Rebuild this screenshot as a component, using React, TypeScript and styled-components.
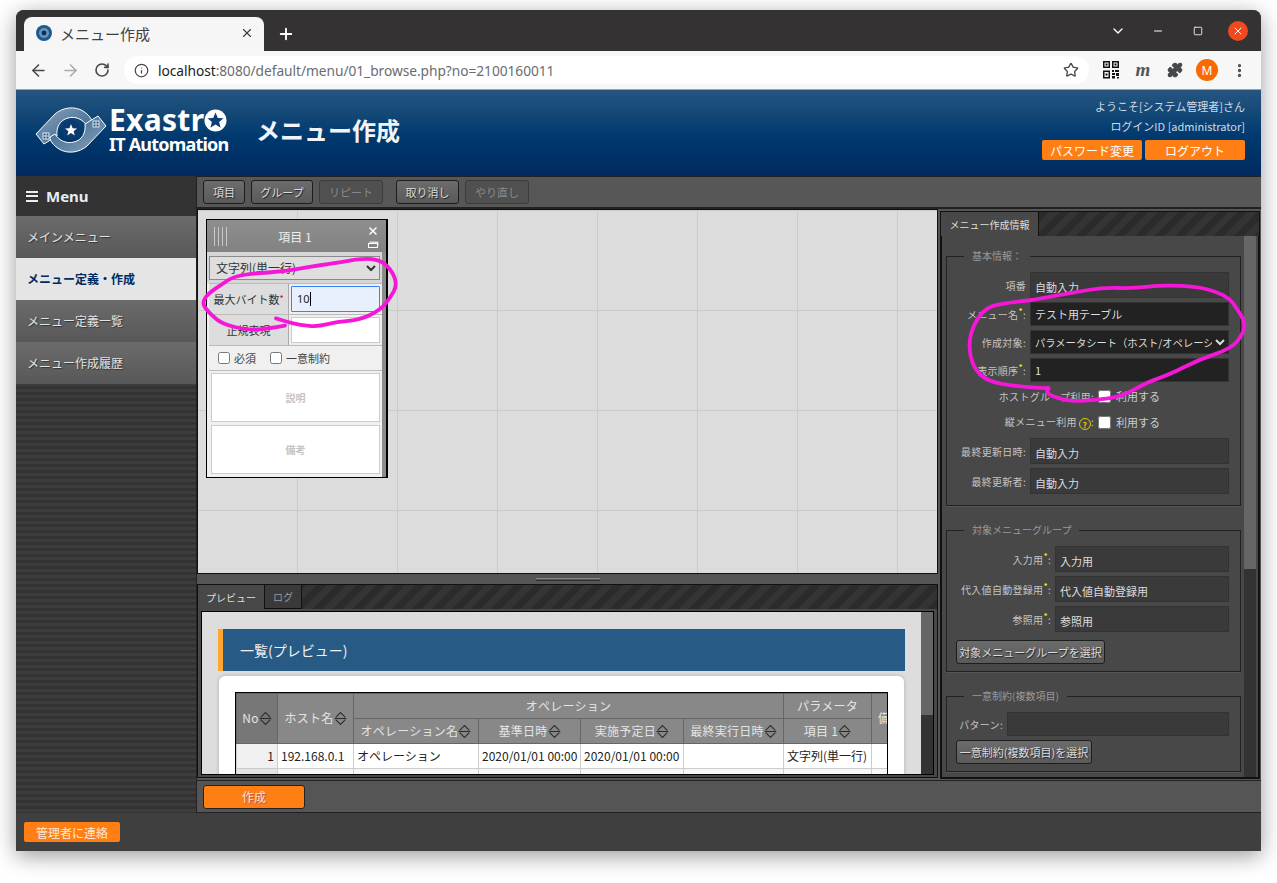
import React from 'react';
import styled, { createGlobalStyle } from 'styled-components';
import { ArrowLeft, ArrowRight, RotateCw, Info, Star, Puzzle, MoreVertical, ChevronDown, Plus, X, Minus, Square } from 'lucide-react';

const GlobalStyle = createGlobalStyle`
  html, body { margin: 0; padding: 0; background: #fff; }
  * { box-sizing: border-box; }
  body { font-family: "Noto Sans CJK JP", "Noto Sans", sans-serif; }
`;

const Win = styled.div`
  position: relative;
  width: 1245px;
  height: 841px;
  margin: 10px 0 0 16px;
  border-radius: 8px 8px 0 0;
  overflow: hidden;
  display: flex;
  flex-direction: column;
  box-shadow: 0 5px 22px rgba(0, 0, 0, 0.4);
  background: #444;
`;

const Frame = styled.div`
  width: 1245px;
  height: 871px;
`;

/* browser chrome */
const TitleBar = styled.div`
  height: 41px;
  flex: none;
  background: #343233;
  display: flex;
  align-items: flex-end;
  padding: 0 3px 0 8px;
`;
const Tab = styled.div`
  width: 240px;
  height: 34px;
  background: #f6f6f6;
  border-radius: 8px 8px 0 0;
  display: flex;
  align-items: center;
  padding: 0 10px 2px 12px;
  gap: 8px;
  color: #3c4043;
  font-size: 15px;
`;
const TabTitle = styled.span`
  flex: 1;
`;
const NewTab = styled.div`
  width: 44px;
  height: 34px;
  color: #fff;
  display: flex;
  align-items: center;
  justify-content: center;
`;
const WinControls = styled.div`
  margin-left: auto;
  display: flex;
  height: 41px;
  align-items: center;
`;
const WinButton = styled.div`
  width: 40px;
  height: 40px;
  display: flex;
  align-items: center;
  justify-content: center;
  color: #fff;
`;
const CloseDot = styled.div`
  width: 20px;
  height: 20px;
  border-radius: 50%;
  background: #f0491f;
  display: flex;
  align-items: center;
  justify-content: center;
  color: #fff;
`;
const AddressBar = styled.div`
  height: 39px;
  flex: none;
  background: #f7f7f7;
  display: flex;
  align-items: center;
  padding: 0 5px 0 6px;
  border-bottom: 1px solid #8fa5b8;
`;
const NavButton = styled.div<{ $dim?: boolean }>`
  width: 32px;
  height: 32px;
  display: flex;
  align-items: center;
  justify-content: center;
  color: ${p => (p.$dim ? '#ababab' : '#46484b')};
`;
const Pill = styled.div`
  width: 965px;
  height: 28px;
  margin-left: 6px;
  margin-right: 6px;
  background: #fff;
  border-radius: 14px;
  display: flex;
  align-items: center;
  padding: 0 10px 0 10px;
  gap: 9px;
  color: #46484b;
`;
const Url = styled.div`
  flex: 1;
  font-family: "Noto Sans", sans-serif;
  font-size: 13.75px;
  color: #6a6d70;
  letter-spacing: -0.05px;
`;
const Host = styled.span`
  color: #202124;
`;
const MarkM = styled.span`
  font-family: "Liberation Serif", serif;
  font-style: italic;
  font-weight: bold;
  font-size: 19px;
  color: #555;
`;
const Avatar = styled.div`
  width: 22px;
  height: 22px;
  border-radius: 50%;
  background: #f66a00;
  color: #fff;
  font-family: "Noto Sans", sans-serif;
  font-size: 12px;
  display: flex;
  align-items: center;
  justify-content: center;
`;

/* page header */
const Header = styled.div`
  height: 86px;
  flex: none;
  background: linear-gradient(#265680, #00396e 55%, #002a60);
  display: flex;
  align-items: center;
  padding: 0 16px 0 19px;
  color: #fff;
`;
const Logo = styled.div`
  display: flex;
  align-items: flex-start;
  width: 223px;
  gap: 2px;
  margin-bottom: 6px;
`;
const MarkSlot = styled.div`
  padding-top: 1px;
  height: 50px;
`;
const LogoWords = styled.div`
  display: flex;
  flex-direction: column;
  color: #fff;
  font-family: "Noto Sans", sans-serif;
  font-weight: 700;
`;
const LogoTop = styled.div`
  display: flex;
  align-items: center;
  font-size: 30px;
  height: 30px;
  line-height: 30px;
  letter-spacing: 0.3px;
`;
const LogoBottom = styled.div`
  font-size: 18px;
  height: 18px;
  line-height: 18px;
  letter-spacing: -0.8px;
`;
const PageTitle = styled.div`
  font-size: 24px;
  font-weight: 700;
  color: #f0f4f8;
  margin-left: -2px;
  margin-bottom: 8px;
`;
const UserBox = styled.div`
  margin-left: auto;
  align-self: flex-start;
  padding-top: 6px;
  display: flex;
  flex-direction: column;
  align-items: flex-end;
  font-size: 11px;
  color: #cfdbe6;
`;
const UserLine = styled.div`
  height: 20px;
  line-height: 20px;
`;
const UserButtons = styled.div`
  display: flex;
  gap: 3px;
  margin-top: 4px;
`;
const OrangeButton = styled.div`
  width: 100px;
  height: 20px;
  background: #ff7f14;
  border-radius: 2px;
  color: #fff;
  font-size: 12px;
  display: flex;
  align-items: center;
  justify-content: center;
`;

/* application */
const Body = styled.div`
  flex: 1;
  display: flex;
  min-height: 0;
`;
const Sidebar = styled.div`
  width: 180px;
  flex: none;
  background: repeating-linear-gradient(#333 0 3px, #3c3c3c 3px 6px);
`;
const MenuHead = styled.div`
  height: 40px;
  background: #333;
  color: #e6eef5;
  font-family: "Noto Sans", sans-serif;
  font-weight: 700;
  font-size: 15px;
  display: flex;
  align-items: center;
  padding-left: 10px;
  gap: 8px;
`;
const Burger = styled.div`
  width: 12px;
  height: 11px;
  border-top: 2px solid #eee;
  border-bottom: 2px solid #eee;
  position: relative;
  &::after {
    content: '';
    position: absolute;
    left: 0;
    right: 0;
    top: 2.5px;
    height: 2px;
    background: #eee;
  }
`;
const MenuItem = styled.div<{ $active?: boolean }>`
  height: 42px;
  display: flex;
  align-items: center;
  padding: 0 0 2px 11px;
  font-size: 12px;
  font-weight: ${p => (p.$active ? 700 : 400)};
  color: ${p => (p.$active ? '#002b62' : '#e4e4e4')};
  background: ${p => (p.$active ? '#e5e5e5' : 'linear-gradient(#6b6b6b, #585858)')};
  text-shadow: ${p => (p.$active ? 'none' : '1px 1px 1px #333')};
`;
const Main = styled.div`
  flex: 1;
  min-width: 0;
  display: flex;
  flex-direction: column;
  background: #555;
  border-left: 1px solid #222;
  border-top: 1px solid #222;
`;
const ToolBar = styled.div`
  height: 32px;
  flex: none;
  display: flex;
  align-items: center;
  gap: 6px;
  padding: 0 6px;
  background: #575757;
  border-bottom: 2px solid #222;
`;
const ToolButton = styled.div<{ $off?: boolean; $gap?: boolean; $w: number }>`
  height: 24px;
  width: ${p => p.$w}px;
  display: flex;
  align-items: center;
  justify-content: center;
  font-size: 11px;
  border-radius: 3px;
  margin-left: ${p => (p.$gap ? '7px' : '0')};
  color: ${p => (p.$off ? '#8a8a8a' : '#ddd')};
  background: ${p => (p.$off ? '#505050' : 'linear-gradient(#6c6c6c, #5a5a5a)')};
  border: 1px solid ${p => (p.$off ? '#3c3c3c' : '#1d1d1d')};
  text-shadow: ${p => (p.$off ? 'none' : '1px 1px 1px #222')};
`;
const Workspace = styled.div`
  flex: 1;
  display: flex;
  min-height: 0;
  gap: 2px;
  padding-right: 1px;
`;
const LeftColumn = styled.div`
  width: 741px;
  flex: none;
  display: flex;
  flex-direction: column;
`;
const Canvas = styled.div`
  height: 365px;
  flex: none;
  border: 1px solid #111;
  background-color: #dcdcdc;
  background-image: linear-gradient(#cbcbcb 1px, transparent 1px), linear-gradient(90deg, #cbcbcb 1px, transparent 1px);
  background-size: 100px 100px;
  background-position: 99px 100px;
  padding: 9px 0 0 8px;
`;

/* menu item card on the canvas */
const Card = styled.div`
  width: 182px;
  height: 259px;
  border: 1px solid #000;
  border-right-width: 2px;
  background: #f0f0f0;
  padding-right: 4px;
  position: relative;
  box-shadow: inset -4px 0 0 #8c8c8c;
`;
const CardHead = styled.div`
  height: 32px;
  margin-right: -4px;
  background: linear-gradient(#8e8e8e, #828282);
  display: grid;
  grid-template-columns: 24px 1fr 27px;
  align-items: center;
`;
const Grip = styled.div`
  width: 15px;
  height: 19px;
  margin-left: 7px;
  background: repeating-linear-gradient(90deg, #c8c8c8 0 1px, transparent 1px 4px);
`;
const CardTitle = styled.div`
  text-align: center;
  font-size: 12px;
  color: #eee;
`;
const CardActions = styled.div`
  display: flex;
  flex-direction: column;
  align-items: center;
  gap: 6px;
  color: #fff;
`;
const SmallWindow = styled.div`
  width: 10px;
  height: 5px;
  border: 1px solid #fff;
  box-shadow: 1px -2px 0 -0.5px #ddd;
`;
const TypeWrap = styled.div`
  padding: 2px 2px 3px;
  background: #d6d6d6;
`;
const TypeSelect = styled.select`
  width: 100%;
  height: 24px;
  border: 1px solid #8a8a8a;
  background: #dedede;
  color: #333;
  font-family: inherit;
  font-size: 12px;
  padding-left: 2px;
  border-radius: 0;
  outline: none;
`;
const CardRow = styled.div`
  display: grid;
  grid-template-columns: 80px 1fr;
  height: 31px;
  border-top: 1px solid #bbb;
  margin-left: 2px;
`;
const CardLabel = styled.div`
  background: #ddd;
  border-right: 1px solid #aaa;
  font-size: 11px;
  color: #333;
  display: flex;
  align-items: center;
  justify-content: center;
`;
const RedMark = styled.sup`
  color: #d00;
  font-size: 9px;
  line-height: 0;
`;
const CardCell = styled.div`
  background: #eee;
  padding: 2px;
`;
const FocusInput = styled.div`
  height: 100%;
  border: 1px solid #3b82f6;
  border-radius: 1px;
  background: #e8f0fe;
  font-family: "Noto Sans", sans-serif;
  font-size: 11px;
  color: #222;
  padding-left: 5px;
  display: flex;
  align-items: center;
`;
const Caret = styled.span`
  width: 1px;
  height: 14px;
  background: #000;
`;
const BlankInput = styled.div`
  height: 100%;
  border: 1px solid #ccc;
  background: #fff;
`;
const CheckRow = styled.div`
  height: 26px;
  margin-left: 2px;
  border-top: 1px solid #bbb;
  border-bottom: 1px solid #bbb;
  background: #f0f0f0;
  display: flex;
  align-items: center;
  padding-left: 9px;
  gap: 14px;
  font-size: 11px;
  color: #444;
`;
const CheckLabel = styled.label`
  display: flex;
  align-items: center;
  gap: 4px;
`;
const CardCheck = styled.input`
  width: 12px;
  height: 12px;
  margin: 0;
`;
const NoteBox = styled.div`
  height: 49px;
  margin: 2px 0 3px 4px;
  width: 169px;
  border: 1px solid #ccc;
  background: #fff;
  color: #c4c4c4;
  font-size: 10px;
  font-weight: 700;
  display: flex;
  align-items: center;
  justify-content: center;
`;

const Splitter = styled.div`
  height: 10px;
  flex: none;
  display: flex;
  align-items: center;
  justify-content: center;
`;
const SplitGrip = styled.div`
  width: 64px;
  height: 3px;
  border-top: 1px solid #888;
  border-bottom: 1px solid #333;
`;
const PreviewPane = styled.div`
  flex: 1;
  min-height: 0;
  display: flex;
  flex-direction: column;
  border: 1px solid #111;
  margin-bottom: 2px;
`;
const TabStrip = styled.div`
  height: 24px;
  flex: none;
  display: flex;
  background: repeating-linear-gradient(135deg, #2b2b2b 0 7px, #343434 7px 14px);
`;
const PaneTab = styled.div<{ $active?: boolean; $w: number }>`
  width: ${p => p.$w}px;
  height: 100%;
  display: flex;
  align-items: center;
  justify-content: center;
  font-size: 10px;
  color: ${p => (p.$active ? '#ddd' : '#999')};
  background: ${p => (p.$active ? '#484848' : '#3a3a3a')};
  border-right: 1px solid #111;
  border-bottom: ${p => (p.$active ? 'none' : '1px solid #111')};
`;
const PreviewOuter = styled.div`
  flex: 1;
  min-height: 0;
  padding: 2px 3px;
  background: #484848;
`;
const PreviewBox = styled.div`
  height: 100%;
  border: 1px solid #000;
  display: flex;
  overflow: hidden;
  background: #ddd;
`;
const PreviewScroll = styled.div`
  flex: 1;
  min-width: 0;
  padding: 17px 16px 0;
  overflow: hidden;
`;
const Bar = styled.div<{ $thumb: number }>`
  width: 12px;
  flex: none;
  background: linear-gradient(#666 ${p => p.$thumb}px, #333 ${p => p.$thumb}px);
`;
const SectionTitle = styled.div`
  height: 42px;
  background: #275a85;
  border-left: 5px solid #ffa630;
  color: #f0f0f0;
  font-size: 14px;
  display: flex;
  align-items: center;
  padding-left: 17px;
`;
const WhiteCard = styled.div`
  margin: 5px 1px 0;
  width: 685px;
  height: 120px;
  background: #fff;
  border-radius: 6px;
  padding: 16px 16px 0;
  box-shadow: 0 0 4px rgba(0, 0, 0, 0.2);
`;
const TableClip = styled.div`
  overflow: hidden;
  height: 100%;
  border: 1px solid #000;
  border-bottom: none;
`;
const Table = styled.table`
  table-layout: fixed;
  width: 695px;
  border-collapse: collapse;
  font-size: 12px;
`;
const Th = styled.th<{ $dark?: boolean; $start?: boolean }>`
  height: 25px;
  padding: 0 0 2px ${p => (p.$start ? '6px' : '0')};
  font-weight: 400;
  letter-spacing: 0.25px;
  text-align: ${p => (p.$start ? 'left' : 'center')};
  color: #e4e4e4;
  background: ${p => (p.$dark ? '#777' : '#888')};
  border: 1px solid #666;
  white-space: nowrap;
  overflow: hidden;
`;
const Td = styled.td<{ $num?: boolean; $alt?: boolean }>`
  height: 25px;
  padding: 0 3px 2px;
  color: #222;
  background: ${p => (p.$num ? (p.$alt ? '#e4e4e4' : '#f0f0f0') : p.$alt ? '#f7f7f7' : '#fff')};
  border: 1px solid #ccc;
  text-align: ${p => (p.$num ? 'right' : 'left')};
  white-space: nowrap;
`;
const SortSvg = styled.svg`
  width: 13px;
  height: 15px;
  vertical-align: -3px;
`;

/* right side form */
const RightPane = styled.div`
  flex: 1;
  min-width: 0;
  display: flex;
  flex-direction: column;
  border: 1px solid #111;
  margin: 2px 0 1px;
`;
const RightBody = styled.div`
  flex: 1;
  min-height: 0;
  display: flex;
  background: #484848;
  border: 1px solid #111;
  border-top: none;
  padding-right: 2px;
`;
const FormArea = styled.div`
  flex: 1;
  min-width: 0;
  padding: 13px 3px 0 4px;
  overflow: hidden;
`;
const Group = styled.fieldset`
  margin: 0 0 17px;
  padding: 9px 11px 7px 9px;
  border: 1px solid #222;
  box-shadow: 0 1px 0 #555;
`;
const Legend = styled.legend`
  margin-left: 8px;
  padding: 0 8px;
  font-size: 10px;
  color: #999;
  line-height: 14px;
`;
const FormRow = styled.div<{ $label: number; $h?: number }>`
  display: grid;
  grid-template-columns: ${p => p.$label}px 1fr;
  align-items: center;
  height: ${p => p.$h ?? 26}px;
  margin-bottom: 4px;
`;
const CheckFormRow = styled(FormRow)`
  padding-bottom: 2px;
`;
const FormLabel = styled.div`
  font-size: 10px;
  letter-spacing: 0.3px;
  color: #c4c4c4;
  text-align: right;
  padding-right: 4px;
  white-space: nowrap;
`;
const YellowMark = styled.sup`
  color: #ff0;
  font-size: 9px;
  line-height: 0;
`;
const ReadInput = styled.input`
  width: 100%;
  height: 26px;
  background: #3a3a3a;
  border: 1px solid #333;
  color: #ddd;
  font-family: inherit;
  font-size: 11px;
  padding: 3px 4px 0 4px;
  outline: none;
`;
const EditInput = styled(ReadInput)`
  height: 24px;
  background: #222;
  padding-top: 0;
`;
const PatternInput = styled(EditInput)`
  background: #3a3a3a;
`;
const DarkSelect = styled.select`
  width: 100%;
  height: 24px;
  background: #222;
  border: 1px solid #333;
  color: #ddd;
  font-family: inherit;
  font-size: 10.3px;
  border-radius: 0;
  outline: none;
`;
const CheckValue = styled.label`
  display: flex;
  align-items: center;
  gap: 5px;
  font-size: 11px;
  color: #ccc;
`;
const DarkCheck = styled.input`
  width: 13px;
  height: 13px;
  margin: 0;
`;
const Help = styled.span`
  display: inline-flex;
  width: 12px;
  height: 12px;
  margin-left: 2px;
  border-radius: 50%;
  border: 1.5px solid #e0d000;
  color: #e0d000;
  font-size: 8px;
  font-weight: 700;
  align-items: center;
  justify-content: center;
  vertical-align: -2px;
`;
const SelectButton = styled.div<{ $w: number; $top?: number }>`
  display: flex;
  width: ${p => p.$w}px;
  height: 24px;
  align-items: center;
  justify-content: center;
  margin-top: ${p => p.$top ?? 0}px;
  font-size: 11px;
  color: #ddd;
  border-radius: 3px;
  border: 1px solid #1d1d1d;
  background: linear-gradient(#6c6c6c, #5a5a5a);
  text-shadow: 1px 1px 1px #222;
`;
const ActionBar = styled.div`
  height: 33px;
  flex: none;
  background: #555;
  border-top: 1px solid #222;
  border-bottom: 1px solid #222;
  display: flex;
  align-items: center;
  padding-left: 6px;
`;
const CreateButton = styled.div`
  width: 102px;
  height: 24px;
  background: #ff7f14;
  border: 1px solid #222;
  border-radius: 3px;
  color: #fbe3cf;
  font-size: 12px;
  display: flex;
  align-items: center;
  justify-content: center;
  text-shadow: 1px 1px 1px #a55;
`;
const Footer = styled.div`
  height: 38px;
  flex: none;
  background: #3f3f3f;
  display: flex;
  align-items: center;
  padding-left: 8px;
`;
const ContactButton = styled.div`
  width: 96px;
  height: 20px;
  background: #ff7f14;
  border-radius: 2px;
  color: #fbeadb;
  font-size: 12px;
  display: flex;
  align-items: center;
  justify-content: center;
`;
const Overlay = styled.svg`
  position: absolute;
  left: 0;
  top: 0;
  width: 1245px;
  height: 841px;
  pointer-events: none;
`;

// smooth a hand drawn stroke through its points
const smooth = (pts: number[][]) => {
  let d = `M${pts[0][0]} ${pts[0][1]}`;
  for (let i = 1; i < pts.length - 1; i++) {
    const mx = (pts[i][0] + pts[i + 1][0]) / 2;
    const my = (pts[i][1] + pts[i + 1][1]) / 2;
    d += ` Q${pts[i][0]} ${pts[i][1]} ${mx} ${my}`;
  }
  const last = pts[pts.length - 1];
  return `${d} L${last[0]} ${last[1]}`;
};

const cardStroke = [
  [285, 362], [230, 372], [170, 375], [110, 360], [80, 345], [45, 310], [38, 290], [55, 265], [100, 235], [130, 215],
  [190, 205], [280, 200], [360, 185], [430, 175], [520, 160], [570, 165], [605, 195], [622, 240], [600, 280], [570, 315],
  [510, 345], [440, 350], [385, 365], [330, 360], [290, 350], [258, 340],
].map(([x, y]) => [190 + x / 3, 205 + y / 3]);

const formStroke = [
  [290, 285], [200, 295], [150, 310], [115, 360], [100, 420], [115, 490], [160, 530], [240, 543], [330, 550], [345, 548],
  [330, 565], [400, 590], [480, 585], [560, 575], [640, 530], [700, 510], [790, 465], [890, 430], [925, 385], [930, 350],
  [905, 310], [880, 275], [800, 245], [680, 240], [600, 250], [500, 248], [420, 262], [290, 285],
].map(([x, y]) => [935 + x / 3, 205 + y / 3]);

const Sort = () => (
  <SortSvg viewBox="0 0 12 14" fill="none" stroke="#2c2c2c" strokeWidth="1">
    <path d="M1.5 6 L6 1.5 L10.5 6" />
    <path d="M0.5 7 H11.5" />
    <path d="M1.5 8 L6 12.5 L10.5 8" />
  </SortSvg>
);

const FavIcon = () => (
  <svg width="16" height="16" viewBox="0 0 16 16">
    <circle cx="8" cy="8" r="8" fill="#1d5a8e" />
    <circle cx="8" cy="8" r="5" fill="#6f93b4" />
    <circle cx="8" cy="8" r="2.4" fill="#06305f" />
  </svg>
);

const QrIcon = () => (
  <svg width="16" height="18" viewBox="0 0 16 18" fill="#111">
    <path d="M0 0h7v7H0z M1.5 1.5v4h4v-4z M9 0h7v7H9z M10.5 1.5v4h4v-4z M0 9.5h7v8H0z M1.5 11v5h4v-5z" fillRule="evenodd" />
    <path d="M2.5 2.5h2v2h-2z M11.5 2.5h2v2h-2z M2.5 12.5h2v2h-2z M9 9h2v2H9z M12 9h4v2h-4z M9 12h3v2H9z M13 12h3v3h-3z M9 15h3v2.5H9z M14 16h2v1.5h-2z" />
  </svg>
);

const bandPath = 'M1 28 L20 8 C28 1 40 0 48 5 C54 9 57 13 57 17 L52 20 C48 13 40 10 33 12 C25 14 21 21 22 30 L9 38 Z';

const LogoMark = () => (
  <svg width="72" height="48" viewBox="0 0 72 48">
    <defs>
      <linearGradient id="band" x1="0" y1="0" x2="1" y2="1">
        <stop offset="0" stopColor="#8ba3ba" />
        <stop offset="1" stopColor="#2f5f8c" />
      </linearGradient>
    </defs>
    <g fill="url(#band)" stroke="#fff" strokeWidth="1">
      <path d={bandPath} />
      <rect x="8" y="27" width="6" height="6" fill="#2a5a85" strokeWidth="0.8" />
      <path d="M8 30h6 M11 27v6" strokeWidth="0.8" />
    </g>
    <g fill="url(#band)" stroke="#fff" strokeWidth="1" transform="rotate(180 36 24)">
      <path d={bandPath} />
      <rect x="8" y="27" width="6" height="6" fill="#2a5a85" strokeWidth="0.8" />
      <path d="M8 30h6 M11 27v6" strokeWidth="0.8" />
    </g>
    <circle cx="36" cy="24" r="10" fill="#0a3a70" />
    <path d="M36 18 L37.6 22.2 L42 22.4 L38.6 25.2 L39.8 29.6 L36 27.1 L32.2 29.6 L33.4 25.2 L30 22.4 L34.4 22.2 Z" fill="#fff" />
  </svg>
);

const LogoStar = () => (
  <svg width="23" height="23" viewBox="0 0 23 23">
    <circle cx="11.5" cy="11.5" r="11" fill="#fff" />
    <path d="M11.5 3.5 L13.8 9 L19.5 9.3 L15.1 13 L16.6 18.8 L11.5 15.6 L6.4 18.8 L7.9 13 L3.5 9.3 L9.2 9 Z" fill="#0e3f74" />
  </svg>
);

const Req = () => <YellowMark>*</YellowMark>;

export default function App() {
  return (
    <Frame>
      <GlobalStyle />
      <Win>
        <TitleBar>
          <Tab>
            <FavIcon />
            <TabTitle>メニュー作成</TabTitle>
            <X size={14} />
          </Tab>
          <NewTab>
            <Plus size={18} strokeWidth={2.5} />
          </NewTab>
          <WinControls>
            <WinButton><ChevronDown size={16} /></WinButton>
            <WinButton><Minus size={12} /></WinButton>
            <WinButton><Square size={10} /></WinButton>
            <WinButton><CloseDot><X size={12} /></CloseDot></WinButton>
          </WinControls>
        </TitleBar>
        <AddressBar>
          <NavButton><ArrowLeft size={19} /></NavButton>
          <NavButton $dim><ArrowRight size={19} /></NavButton>
          <NavButton><RotateCw size={16} strokeWidth={2.4} /></NavButton>
          <Pill>
            <Info size={15} />
            <Url><Host>localhost</Host>:8080/default/menu/01_browse.php?no=2100160011</Url>
            <Star size={16} />
          </Pill>
          <NavButton><QrIcon /></NavButton>
          <NavButton><MarkM>m</MarkM></NavButton>
          <NavButton><Puzzle size={16} fill="#46484b" /></NavButton>
          <NavButton><Avatar>M</Avatar></NavButton>
          <NavButton><MoreVertical size={17} strokeWidth={2.6} /></NavButton>
        </AddressBar>

        <Header>
          <Logo>
            <MarkSlot><LogoMark /></MarkSlot>
            <LogoWords>
              <LogoTop>Exastr<LogoStar /></LogoTop>
              <LogoBottom>IT Automation</LogoBottom>
            </LogoWords>
          </Logo>
          <PageTitle>メニュー作成</PageTitle>
          <UserBox>
            <UserLine>ようこそ[システム管理者]さん</UserLine>
            <UserLine>ログインID [administrator]</UserLine>
            <UserButtons>
              <OrangeButton>パスワード変更</OrangeButton>
              <OrangeButton>ログアウト</OrangeButton>
            </UserButtons>
          </UserBox>
        </Header>

        <Body>
          <Sidebar>
            <MenuHead><Burger />Menu</MenuHead>
            <MenuItem>メインメニュー</MenuItem>
            <MenuItem $active>メニュー定義・作成</MenuItem>
            <MenuItem>メニュー定義一覧</MenuItem>
            <MenuItem>メニュー作成履歴</MenuItem>
          </Sidebar>
          <Main>
            <ToolBar>
              <ToolButton $w={42}>項目</ToolButton>
              <ToolButton $w={62}>グループ</ToolButton>
              <ToolButton $off $w={64}>リピート</ToolButton>
              <ToolButton $gap $w={63}>取り消し</ToolButton>
              <ToolButton $off $w={64}>やり直し</ToolButton>
            </ToolBar>
            <Workspace>
              <LeftColumn>
                <Canvas>
                  <Card>
                    <CardHead>
                      <Grip />
                      <CardTitle>項目 1</CardTitle>
                      <CardActions>
                        <X size={12} strokeWidth={3} />
                        <SmallWindow />
                      </CardActions>
                    </CardHead>
                    <TypeWrap>
                      <TypeSelect defaultValue="text">
                        <option value="text">文字列(単一行)</option>
                      </TypeSelect>
                    </TypeWrap>
                    <CardRow>
                      <CardLabel>最大バイト数<RedMark>*</RedMark></CardLabel>
                      <CardCell><FocusInput>10<Caret /></FocusInput></CardCell>
                    </CardRow>
                    <CardRow>
                      <CardLabel>正規表現</CardLabel>
                      <CardCell><BlankInput /></CardCell>
                    </CardRow>
                    <CheckRow>
                      <CheckLabel><CardCheck type="checkbox" readOnly />必須</CheckLabel>
                      <CheckLabel><CardCheck type="checkbox" readOnly />一意制約</CheckLabel>
                    </CheckRow>
                    <NoteBox>説明</NoteBox>
                    <NoteBox>備考</NoteBox>
                  </Card>
                </Canvas>
                <Splitter><SplitGrip /></Splitter>
                <PreviewPane>
                  <TabStrip>
                    <PaneTab $active $w={67}>プレビュー</PaneTab>
                    <PaneTab $w={37}>ログ</PaneTab>
                  </TabStrip>
                  <PreviewOuter>
                    <PreviewBox>
                      <PreviewScroll>
                        <SectionTitle>一覧(プレビュー)</SectionTitle>
                        <WhiteCard>
                          <TableClip>
                            <Table>
                              <colgroup>
                                <col width="41" />
                                <col width="76" />
                                <col width="125" />
                                <col width="102" />
                                <col width="103" />
                                <col width="100" />
                                <col width="88" />
                                <col width="60" />
                              </colgroup>
                              <thead>
                                <tr>
                                  <Th rowSpan={2} $dark>No<Sort /></Th>
                                  <Th rowSpan={2}>ホスト名<Sort /></Th>
                                  <Th colSpan={4}>オペレーション</Th>
                                  <Th>パラメータ</Th>
                                  <Th rowSpan={2} $start>備考</Th>
                                </tr>
                                <tr>
                                  <Th>オペレーション名<Sort /></Th>
                                  <Th>基準日時<Sort /></Th>
                                  <Th>実施予定日<Sort /></Th>
                                  <Th>最終実行日時<Sort /></Th>
                                  <Th>項目 1<Sort /></Th>
                                </tr>
                              </thead>
                              <tbody>
                                <tr>
                                  <Td $num>1</Td>
                                  <Td>192.168.0.1</Td>
                                  <Td>オペレーション</Td>
                                  <Td>2020/01/01 00:00</Td>
                                  <Td>2020/01/01 00:00</Td>
                                  <Td />
                                  <Td>文字列(単一行)</Td>
                                  <Td />
                                </tr>
                                <tr>
                                  <Td $num $alt />
                                  <Td $alt />
                                  <Td $alt />
                                  <Td $alt />
                                  <Td $alt />
                                  <Td $alt />
                                  <Td $alt />
                                  <Td $alt />
                                </tr>
                              </tbody>
                            </Table>
                          </TableClip>
                        </WhiteCard>
                      </PreviewScroll>
                      <Bar $thumb={103} />
                    </PreviewBox>
                  </PreviewOuter>
                </PreviewPane>
              </LeftColumn>

              <RightPane>
                <TabStrip>
                  <PaneTab $active $w={98}>メニュー作成情報</PaneTab>
                </TabStrip>
                <RightBody>
                  <FormArea>
                    <Group>
                      <Legend>基本情報：</Legend>
                      <FormRow $label={74}>
                        <FormLabel>項番</FormLabel>
                        <ReadInput readOnly value="自動入力" />
                      </FormRow>
                      <FormRow $label={74} $h={24}>
                        <FormLabel>メニュー名<Req />:</FormLabel>
                        <EditInput readOnly value="テスト用テーブル" />
                      </FormRow>
                      <FormRow $label={74} $h={24}>
                        <FormLabel>作成対象:</FormLabel>
                        <DarkSelect defaultValue="a">
                          <option value="a">パラメータシート（ホスト/オペレーションあり）</option>
                        </DarkSelect>
                      </FormRow>
                      <FormRow $label={74} $h={24}>
                        <FormLabel>表示順序<Req />:</FormLabel>
                        <EditInput readOnly value="1" />
                      </FormRow>
                      <CheckFormRow $label={142} $h={22}>
                        <FormLabel>ホストグループ利用:</FormLabel>
                        <CheckValue><DarkCheck type="checkbox" readOnly />利用する</CheckValue>
                      </CheckFormRow>
                      <CheckFormRow $label={142} $h={22}>
                        <FormLabel>縦メニュー利用<Help>?</Help>:</FormLabel>
                        <CheckValue><DarkCheck type="checkbox" readOnly />利用する</CheckValue>
                      </CheckFormRow>
                      <FormRow $label={74}>
                        <FormLabel>最終更新日時:</FormLabel>
                        <ReadInput readOnly value="自動入力" />
                      </FormRow>
                      <FormRow $label={74}>
                        <FormLabel>最終更新者:</FormLabel>
                        <ReadInput readOnly value="自動入力" />
                      </FormRow>
                    </Group>
                    <Group>
                      <Legend>対象メニューグループ</Legend>
                      <FormRow $label={99}>
                        <FormLabel>入力用<Req />:</FormLabel>
                        <ReadInput readOnly value="入力用" />
                      </FormRow>
                      <FormRow $label={99}>
                        <FormLabel>代入値自動登録用<Req />:</FormLabel>
                        <ReadInput readOnly value="代入値自動登録用" />
                      </FormRow>
                      <FormRow $label={99}>
                        <FormLabel>参照用<Req />:</FormLabel>
                        <ReadInput readOnly value="参照用" />
                      </FormRow>
                      <SelectButton $w={149} $top={8}>対象メニューグループを選択</SelectButton>
                    </Group>
                    <Group>
                      <Legend>一意制約(複数項目)</Legend>
                      <FormRow $label={51} $h={24}>
                        <FormLabel>パターン:</FormLabel>
                        <PatternInput readOnly />
                      </FormRow>
                      <SelectButton $w={136}>一意制約(複数項目)を選択</SelectButton>
                    </Group>
                  </FormArea>
                  <Bar $thumb={333} />
                </RightBody>
              </RightPane>
            </Workspace>
            <ActionBar>
              <CreateButton>作成</CreateButton>
            </ActionBar>
          </Main>
        </Body>
        <Footer>
          <ContactButton>管理者に連絡</ContactButton>
        </Footer>
        <Overlay viewBox="16 10 1245 841" fill="none" stroke="#f516d8" strokeWidth="3.8" strokeLinecap="round" strokeLinejoin="round">
          <path d={smooth(cardStroke)} />
          <path d={smooth(formStroke)} />
        </Overlay>
      </Win>
    </Frame>
  );
}
